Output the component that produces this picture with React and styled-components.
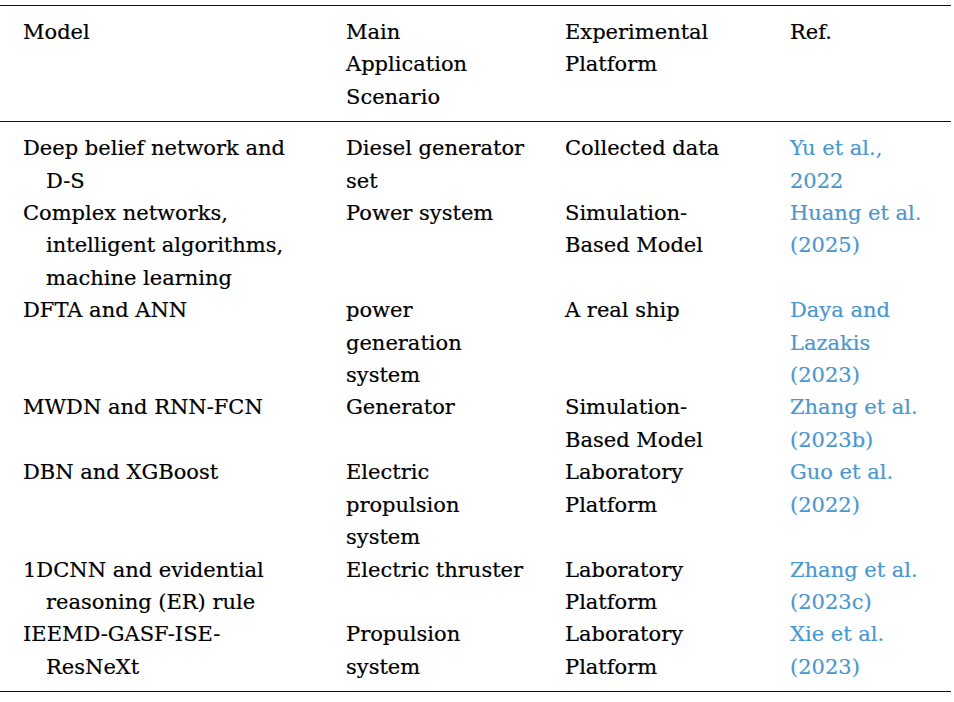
import styled, { createGlobalStyle } from 'styled-components'

const GlobalStyle = createGlobalStyle`
    html, body {
        margin: 0;
        padding: 0;
        background: #fff;
    }
    body {
        font-family: "DejaVu Serif", "Liberation Serif", serif;
        color: #000;
    }
`

const columns = ['Model', 'Main Application Scenario', 'Experimental Platform', 'Ref.']

const header = [
    ['Model'],
    ['Main', 'Application', 'Scenario'],
    ['Experimental', 'Platform'],
    ['Ref.'],
]

const rows = [
    {
        model: ['Deep belief network and', 'D-S'],
        scenario: ['Diesel generator', 'set'],
        platform: ['Collected data'],
        ref: ['Yu et al.,', '2022'],
    },
    {
        model: ['Complex networks,', 'intelligent algorithms,', 'machine learning'],
        scenario: ['Power system'],
        platform: ['Simulation-', 'Based Model'],
        ref: ['Huang et al.', '(2025)'],
    },
    {
        model: ['DFTA and ANN'],
        scenario: ['power', 'generation', 'system'],
        platform: ['A real ship'],
        ref: ['Daya and', 'Lazakis', '(2023)'],
    },
    {
        model: ['MWDN and RNN-FCN'],
        scenario: ['Generator'],
        platform: ['Simulation-', 'Based Model'],
        ref: ['Zhang et al.', '(2023b)'],
    },
    {
        model: ['DBN and XGBoost'],
        scenario: ['Electric', 'propulsion', 'system'],
        platform: ['Laboratory', 'Platform'],
        ref: ['Guo et al.', '(2022)'],
    },
    {
        model: ['1DCNN and evidential', 'reasoning (ER) rule'],
        scenario: ['Electric thruster'],
        platform: ['Laboratory', 'Platform'],
        ref: ['Zhang et al.', '(2023c)'],
    },
    {
        model: ['IEEMD-GASF-ISE-', 'ResNeXt'],
        scenario: ['Propulsion', 'system'],
        platform: ['Laboratory', 'Platform'],
        ref: ['Xie et al.', '(2023)'],
    },
]

const Lines = ({ lines, hanging }) => (
    <>
        {lines.map((line, i) => (
            <Line key={i} $indent={hanging && i > 0}>{line}</Line>
        ))}
    </>
)

const App = () => {
    return (
        <>
            <GlobalStyle />
            <Wrap>
                <Table aria-label={columns.join(', ')}>
                    <colgroup>
                        <col style={{ width: 346 }} />
                        <col style={{ width: 219 }} />
                        <col style={{ width: 225 }} />
                        <col />
                    </colgroup>
                    <thead>
                        <tr>
                            {header.map((lines, i) => (
                                <HeadCell key={i} $first={i === 0}>
                                    <Lines lines={lines} />
                                </HeadCell>
                            ))}
                        </tr>
                    </thead>
                    <tbody>
                        {rows.map((row, i) => (
                            <tr key={i}>
                                <Cell $first $top={i === 0} $bottom={i === rows.length - 1}>
                                    <Lines lines={row.model} hanging />
                                </Cell>
                                <Cell $top={i === 0} $bottom={i === rows.length - 1}>
                                    <Lines lines={row.scenario} />
                                </Cell>
                                <Cell $top={i === 0} $bottom={i === rows.length - 1}>
                                    <Lines lines={row.platform} />
                                </Cell>
                                <Cell $top={i === 0} $bottom={i === rows.length - 1}>
                                    <RefLink href="#">
                                        <Lines lines={row.ref} />
                                    </RefLink>
                                </Cell>
                            </tr>
                        ))}
                    </tbody>
                </Table>
            </Wrap>
        </>
    )
}

const Wrap = styled.div`
    width: 954px;
    padding-top: 5px;
`

const Table = styled.table`
    width: 951px;
    border-collapse: collapse;
    table-layout: fixed;
    border-top: 1.5px solid #111;
    border-bottom: 1.5px solid #111;
    font-size: 21px;
    line-height: 32.4px;
    -webkit-text-stroke: 0.2px currentColor;
`

const HeadCell = styled.th`
    text-align: left;
    font-weight: normal;
    vertical-align: top;
    padding: 10px 0 8px ${props => props.$first ? '23px' : '0'};
    border-bottom: 1.5px solid #111;
`

const Cell = styled.td`
    vertical-align: top;
    padding: ${props => props.$top ? '10px' : '0'} 0 ${props => props.$bottom ? '8px' : '0'} ${props => props.$first ? '23px' : '0'};
`

const Line = styled.div`
    white-space: nowrap;
    padding-left: ${props => props.$indent ? '23px' : '0'};
`

const RefLink = styled.a`
    color: #4a98cf;
    text-decoration: none;
    display: block;
`

export default App
